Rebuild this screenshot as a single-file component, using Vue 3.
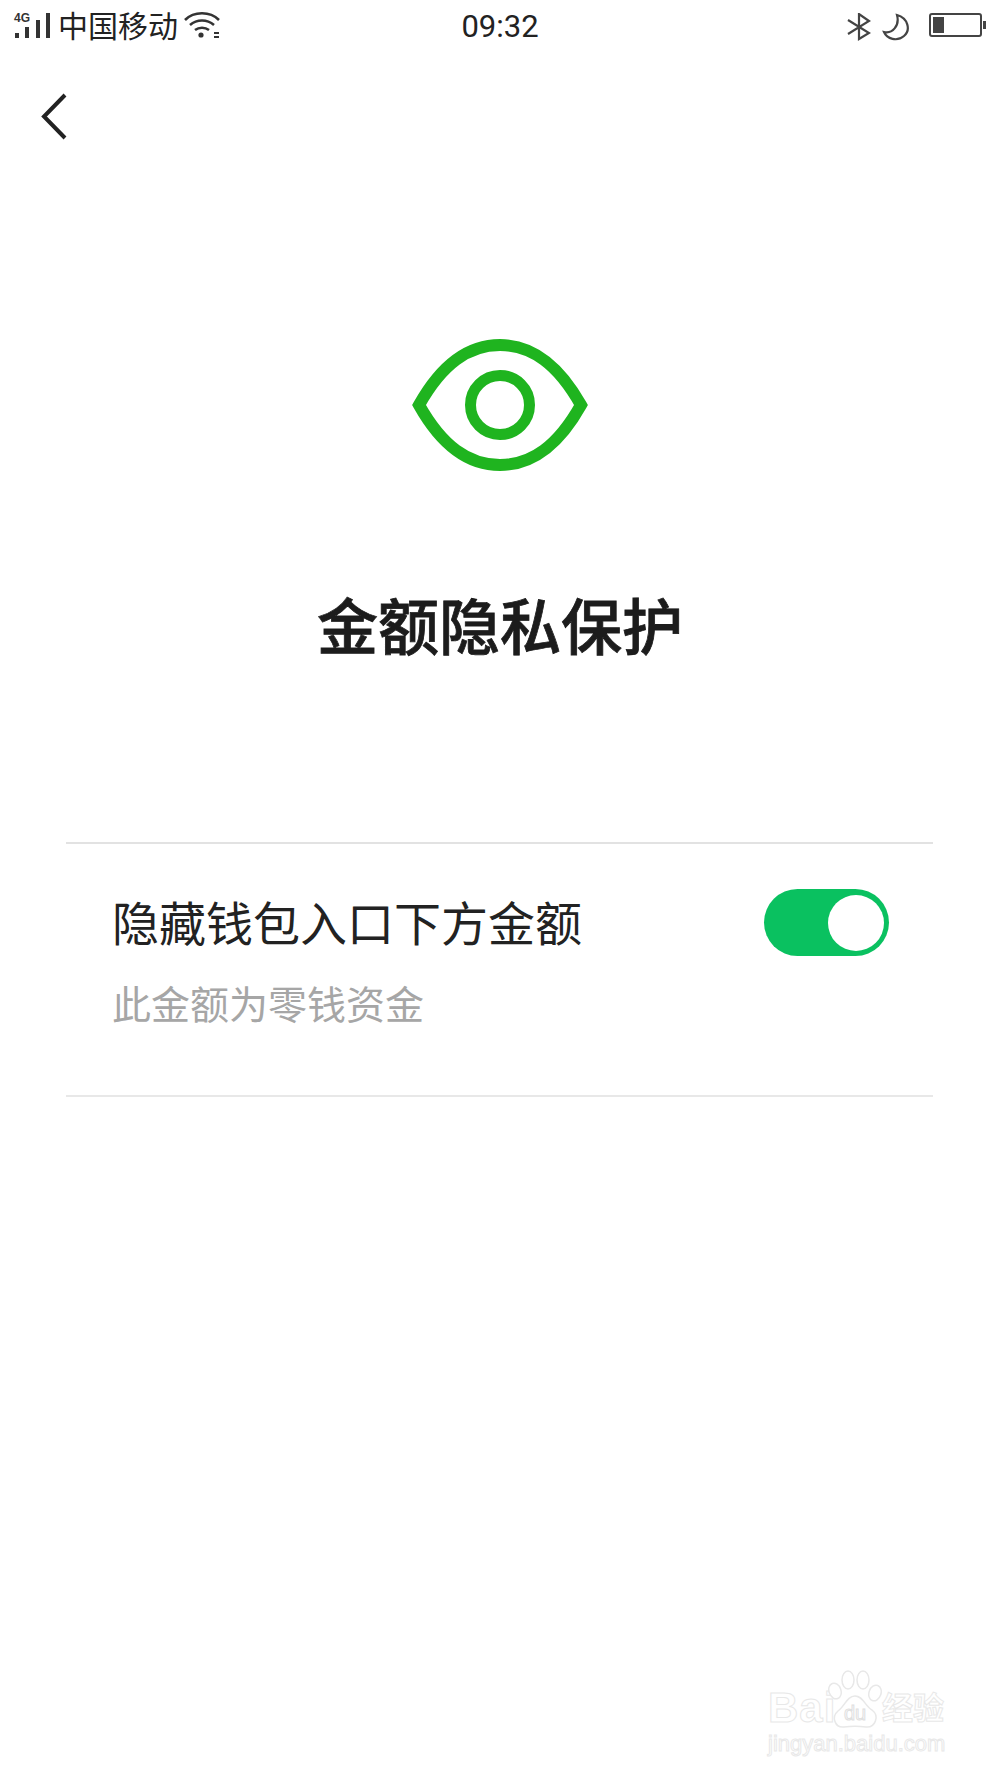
<template>
  <div class="page">
    <!-- status bar -->
    <div class="status-bar">
      <div class="status-left">
        <div class="signal">
          <span class="net">4G</span>
          <svg width="37" height="26" viewBox="0 0 37 26">
            <rect x="1" y="20" width="4" height="5" fill="#333" />
            <rect x="11" y="14" width="4" height="11" fill="#333" />
            <rect x="22" y="7" width="4" height="18" fill="#333" />
            <rect x="32" y="0" width="4" height="25" fill="#333" />
          </svg>
        </div>
        <span class="carrier">中国移动</span>
        <svg class="wifi" width="36" height="28" viewBox="0 0 36 28" fill="none" stroke="#333" stroke-width="2.6">
          <path d="M1 9 C10 0 26 0 35 9" />
          <path d="M6 14 C13 8 23 8 30 14" />
          <path d="M11 19 C15 16 21 16 25 19" />
          <circle cx="17" cy="24" r="2.6" fill="#333" stroke="none" />
          <path d="M30 22 L35 22 M30 26 L35 26" stroke-width="2" />
        </svg>
      </div>
      <div class="time">09:32</div>
      <div class="status-right">
        <svg width="24" height="28" viewBox="0 0 24 28" fill="none" stroke="#444" stroke-width="2.2">
          <path d="M1 7 L22 20 L12 26 L12 1 L22 8 L1 21" />
        </svg>
        <svg width="28" height="28" viewBox="0 0 28 28" fill="none" stroke="#444" stroke-width="2.2">
          <path d="M15 2 C26 5 29 17 22 23 C15 29 5 26 2 19 C10 21 18 13 15 2 Z" />
        </svg>
        <div class="battery">
          <div class="battery-body"><div class="battery-level"></div></div>
          <div class="battery-cap"></div>
        </div>
      </div>
    </div>

    <!-- back -->
    <div class="nav">
      <svg width="30" height="50" viewBox="0 0 30 50" fill="none" stroke="#222" stroke-width="4">
        <path d="M25 3 L4 24.500 L25 46" />
      </svg>
    </div>

    <div class="hero">
      <svg width="176" height="132" viewBox="0 0 176 132" fill="none" stroke="#1fb41f" stroke-width="12">
        <path d="M7 66 C30 25 56 6 88 6 C120 6 146 25 169 66 C146 107 120 126 88 126 C56 126 30 107 7 66 Z" />
        <circle cx="88" cy="66" r="29.500" stroke-width="11" />
      </svg>
      <h1 class="title">金额隐私保护</h1>
    </div>

    <div class="setting">
      <div class="setting-text">
        <div class="setting-name">隐藏钱包入口下方金额</div>
        <div class="setting-desc">此金额为零钱资金</div>
      </div>
      <div class="toggle"><div class="knob"></div></div>
    </div>

    <!-- watermark -->
    <div class="watermark">
      <div class="wm-top">
        <span class="wm-bai">Bai</span>
        <svg class="wm-paw" width="54" height="60" viewBox="0 0 54 60" fill="#fff" stroke="#e8e8e8" stroke-width="1.500">
          <ellipse cx="7" cy="21" rx="6" ry="8" transform="rotate(-20 7 21)" />
          <ellipse cx="20" cy="10" rx="6" ry="9" />
          <ellipse cx="35" cy="10" rx="6" ry="9" />
          <ellipse cx="47" cy="23" rx="6" ry="8" transform="rotate(20 47 23)" />
          <path d="M27 26 C35 26 37 36 44 40 C52 46 47 58 38 57 C31 56 23 56 16 57 C7 58 3 47 10 41 C17 36 19 26 27 26 Z" />
          <text x="27" y="50" text-anchor="middle" class="wm-du">du</text>
        </svg>
        <span class="wm-cn">经验</span>
      </div>
      <div class="wm-url">jingyan.baidu.com</div>
    </div>
  </div>
</template>

<script setup>
</script>

<style scoped>
.page {
  position: relative;
  width: 1000px;
  height: 1778px;
  overflow: hidden;
  background: #fff;
  font-family: "Liberation Sans", "Noto Sans CJK SC", sans-serif;
  color: #1c1c1c;
}

.status-bar {
  display: grid;
  grid-template-columns: 1fr auto 1fr;
  align-items: center;
  height: 54px;
  padding: 0 14px;
  box-sizing: border-box;
}

.status-left {
  display: flex;
  align-items: center;
}

.signal {
  position: relative;
  width: 37px;
  height: 26px;
  margin-top: -2px;
}

.signal svg {
  display: block;
}

.net {
  position: absolute;
  left: 0;
  top: 0;
  font-size: 12px;
  line-height: 11px;
  font-weight: 700;
  color: #333;
  background: #fff;
  padding-right: 1px;
}

.carrier {
  margin-left: 7px;
  font-size: 30px;
  line-height: 54px;
  color: #222;
}

.wifi {
  margin-left: 6px;
  margin-top: -4px;
}

.time {
  font-family: Roboto, "Liberation Sans", sans-serif;
  font-size: 31px;
  line-height: 54px;
  color: #222;
}

.status-right {
  display: flex;
  justify-content: flex-end;
  align-items: center;
}

.status-right svg:nth-child(2) {
  margin-left: 11px;
}

.battery {
  display: flex;
  align-items: center;
  margin-left: 19px;
  margin-top: -4px;
}

.battery-body {
  width: 53px;
  height: 24px;
  box-sizing: border-box;
  border: 2px solid #444;
  border-radius: 3px;
  padding: 2px;
}

.battery-level {
  width: 11px;
  height: 100%;
  background: #444;
}

.battery-cap {
  width: 3px;
  height: 8px;
  margin-left: 1px;
  background: #444;
}

.nav {
  height: 89px;
  padding: 38px 0 0 40px;
  box-sizing: border-box;
}

.nav svg {
  display: block;
}

.hero {
  display: flex;
  flex-direction: column;
  align-items: center;
  padding-top: 196px;
}

.hero svg {
  display: block;
}

.title {
  margin: 118px 0 0;
  font-size: 61px;
  line-height: 80px;
  font-weight: 500;
  color: #1c1c1c;
  -webkit-text-stroke: 0.8px #1c1c1c;
}

.setting {
  display: flex;
  justify-content: space-between;
  align-items: flex-start;
  height: 255px;
  box-sizing: border-box;
  margin: 173px 67px 0 66px;
  padding: 45px 44px 0 46px;
  border-top: 2px solid #e2e2e2;
  border-bottom: 2px solid #e8e8e8;
}

.setting-text {
  padding-top: 4px;
}

.setting-name {
  font-size: 47px;
  line-height: 64px;
  color: #222;
}

.setting-desc {
  margin-top: 24px;
  font-size: 39px;
  line-height: 50px;
  color: #a6a6a6;
}

.toggle {
  display: flex;
  justify-content: flex-end;
  align-items: center;
  width: 125px;
  height: 67px;
  padding-right: 5px;
  box-sizing: border-box;
  border-radius: 34px;
  background: #0ac160;
}

.knob {
  width: 56px;
  height: 56px;
  border-radius: 50%;
  background: #fff;
}

.watermark {
  position: absolute;
  left: 768px;
  top: 1670px;
  width: 190px;
  color: #fff;
  -webkit-text-stroke: 1px #e8e8e8;
}

.wm-top {
  display: flex;
  align-items: flex-end;
  height: 60px;
}

.wm-bai {
  width: 60px;
  font-family: "Liberation Sans", sans-serif;
  font-size: 42px;
  line-height: 44px;
  font-weight: 700;
  letter-spacing: 1px;
}

.wm-paw {
  flex: none;
}

.wm-cn {
  font-size: 31px;
  line-height: 42px;
  font-weight: 700;
}

.wm-du {
  font-family: "Liberation Sans", sans-serif;
  font-size: 20px;
  fill: #fff;
  stroke: #e0e0e0;
  stroke-width: 1;
}

.wm-url {
  margin-top: 0;
  font-size: 22px;
  line-height: 28px;
  white-space: nowrap;
}
</style>
